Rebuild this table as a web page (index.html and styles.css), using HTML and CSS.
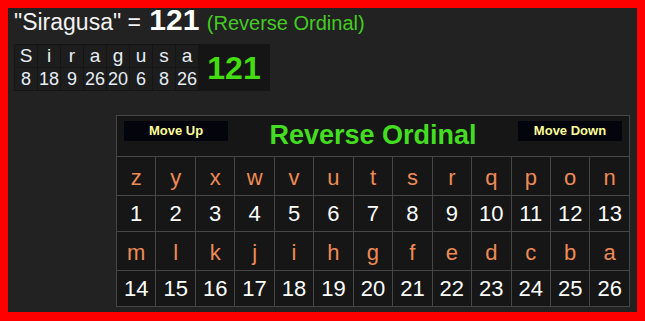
FILE: index.html
```html
<!DOCTYPE html>
<html>
<head>
<meta charset="utf-8">
<link rel="stylesheet" href="styles.css">
</head>
<body>
<div class="frame">
  <div class="headline">"Siragusa" = <span class="total">121</span> <span class="cipher">(Reverse Ordinal)</span></div>
  <table class="word">
    <tr class="letters">
      <td>S</td><td>i</td><td>r</td><td>a</td><td>g</td><td>u</td><td>s</td><td>a</td>
      <td class="sum" rowspan="2">121</td>
    </tr>
    <tr class="values">
      <td>8</td><td>18</td><td>9</td><td>26</td><td>20</td><td>6</td><td>8</td><td>26</td>
    </tr>
  </table>
  <div class="chart-wrap">
    <table class="chart">
      <tr class="head">
        <td colspan="13">
          <div class="head-inner">
            <span class="btn">Move Up</span>
            <span class="title">Reverse Ordinal</span>
            <span class="btn">Move Down</span>
          </div>
        </td>
      </tr>
      <tr class="lrow">
        <td>z</td><td>y</td><td>x</td><td>w</td><td>v</td><td>u</td><td>t</td><td>s</td><td>r</td><td>q</td><td>p</td><td>o</td><td>n</td>
      </tr>
      <tr class="nrow">
        <td>1</td><td>2</td><td>3</td><td>4</td><td>5</td><td>6</td><td>7</td><td>8</td><td>9</td><td>10</td><td>11</td><td>12</td><td>13</td>
      </tr>
      <tr class="lrow">
        <td>m</td><td>l</td><td>k</td><td>j</td><td>i</td><td>h</td><td>g</td><td>f</td><td>e</td><td>d</td><td>c</td><td>b</td><td>a</td>
      </tr>
      <tr class="nrow">
        <td>14</td><td>15</td><td>16</td><td>17</td><td>18</td><td>19</td><td>20</td><td>21</td><td>22</td><td>23</td><td>24</td><td>25</td><td>26</td>
      </tr>
    </table>
  </div>
</div>
</body>
</html>
```

FILE: styles.css
```css
html, body {
  margin: 0;
  padding: 0;
  background: #ff0000;
}
.frame {
  box-sizing: border-box;
  height: 321px;
  border-style: solid;
  border-color: #ff0000;
  border-width: 8px 8px 9px 8px;
  background: #222222;
  padding: 1px 7px 0 6px;
  font-family: "Liberation Sans", Arial, sans-serif;
  color: #ffffff;
}
.headline {
  font-size: 23px;
  line-height: 22px;
  color: #f2f2f2;
  white-space: nowrap;
}
.headline .total {
  font-size: 30px;
  font-weight: bold;
  color: #ffffff;
  margin-left: 2px;
}
.headline .cipher {
  font-size: 20px;
  color: #44cc22;
  margin-left: 1px;
}
.word {
  margin-top: 10px;
  border-collapse: separate;
  border-spacing: 1px;
  background: #151515;
}
.word td {
  width: 22px;
  padding: 0;
  text-align: center;
  background: #1d1d1d;
  color: #e6eef6;
}
.word .letters td {
  height: 22px;
  font-size: 19px;
  line-height: 22px;
}
.word .values td {
  height: 22px;
  font-size: 18px;
  line-height: 22px;
}
.word td.sum {
  width: 70px;
  background: #151515;
  color: #44dd11;
  font-size: 32px;
  font-weight: bold;
  line-height: 40px;
}
.chart-wrap {
  display: flex;
  justify-content: flex-end;
  margin-top: 24px;
}
.chart {
  border-collapse: collapse;
  table-layout: fixed;
  width: 514px;
  background: #161616;
}
.chart td {
  border: 1px solid #464646;
  padding: 0;
  text-align: center;
  font-size: 22px;
}
.chart .head td {
  height: 40px;
  padding: 0 7px;
  vertical-align: top;
}
.head-inner {
  display: flex;
  align-items: flex-start;
  justify-content: space-between;
  height: 40px;
}
.btn {
  width: 104px;
  height: 20px;
  margin-top: 5px;
  line-height: 20px;
  background: #04040c;
  color: #ffff99;
  font-size: 13px;
  font-weight: bold;
  text-align: center;
}
.title {
  font-size: 27px;
  font-weight: bold;
  color: #44dd22;
  line-height: 30px;
  padding-top: 4px;
}
.lrow td {
  height: 35px;
  padding-top: 3px;
  color: #ee8a55;
}
.nrow td {
  height: 35px;
  color: #ffffff;
}
```
